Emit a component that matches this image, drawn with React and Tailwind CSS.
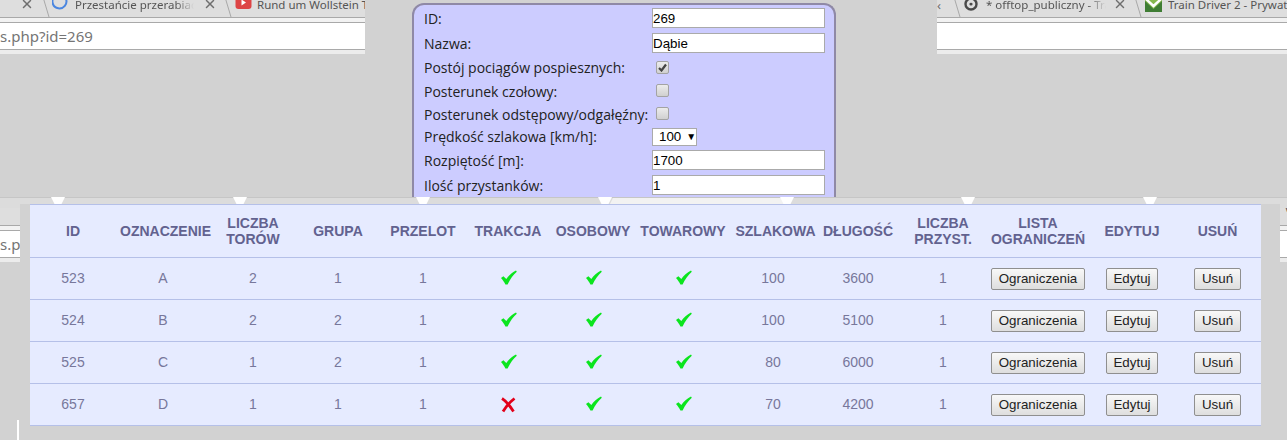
import { X } from 'lucide-react'

const rows = [
  { id: 523, mark: 'A', tracks: 2, group: 1, pass: 1, traction: true, speed: 100, length: 3600, stops: 1 },
  { id: 524, mark: 'B', tracks: 2, group: 2, pass: 1, traction: true, speed: 100, length: 5100, stops: 1 },
  { id: 525, mark: 'C', tracks: 1, group: 2, pass: 1, traction: true, speed: 80, length: 6000, stops: 1 },
  { id: 657, mark: 'D', tracks: 1, group: 1, pass: 1, traction: false, speed: 70, length: 4200, stops: 1 },
]

const columns = [
  { w: 'w-[86px]', label: ['ID'] },
  { w: 'w-[94px]', label: ['OZNACZENIE'], pad: 'pl-[4px]' },
  { w: 'w-[86px]', label: ['LICZBA', 'TORÓW'] },
  { w: 'w-[84px]', label: ['GRUPA'] },
  { w: 'w-[86px]', label: ['PRZELOT'] },
  { w: 'w-[84px]', label: ['TRAKCJA'] },
  { w: 'w-[86px]', label: ['OSOBOWY'] },
  { w: 'w-[94px]', label: ['TOWAROWY'] },
  { w: 'w-[86px]', label: ['SZLAKOWA'], pad: 'pl-[5px]' },
  { w: 'w-[84px]', label: ['DŁUGOŚĆ'] },
  { w: 'w-[86px]', label: ['LICZBA', 'PRZYST.'] },
  { w: 'w-[104px]', label: ['LISTA', 'OGRANICZEŃ'] },
  { w: 'w-[84px]', label: ['EDYTUJ'] },
  { w: 'w-[87px]', label: ['USUŃ'] },
]

function Check() {
  return (
    <svg width="17" height="15" viewBox="0 0 17 15" className="mx-auto -mt-[2px] block">
      <path d="M1 8 L3.4 6.2 L6.3 9 C8.6 5.6 12 2.6 16 0.5 L16.8 1.8 C13 5 10 9.6 7.6 14.5 L5.4 14.5 C4.4 12.2 2.8 10 1 8 Z" fill="#0be51e" />
    </svg>
  )
}

function Cross() {
  return (
    <svg width="16" height="16" viewBox="0 0 16 16" className="mx-auto block">
      <path d="M2 1.5 C6 4 10 9 13.5 14.5 M14.5 1.5 C10 5 6 9.5 3 14.5" stroke="#e2001a" strokeWidth="2.8" fill="none" />
    </svg>
  )
}

function Slash() {
  return (
    <svg width="8" height="17" viewBox="0 0 8 17" className="shrink-0">
      <path d="M1 -3 L7 17" stroke="#a8a8a8" fill="none" />
    </svg>
  )
}

function Close({ className }) {
  return <X size={14} strokeWidth={2.5} className={`mb-[6px] shrink-0 text-[#6e6e6e] ${className}`} />
}

function Title({ w, children }) {
  return (
    <span className={`${w} mb-[5px] shrink-0 overflow-hidden whitespace-nowrap text-[11.5px] leading-[14px] text-[#555] [mask-image:linear-gradient(to_right,black_85%,transparent)]`}>
      {children}
    </span>
  )
}

function Chrome({ w, tabs, url }) {
  return (
    <div className={`${w} shrink-0`}>
      <div className="flex h-[18px] items-end overflow-hidden border-b border-[#a9a9a9] bg-[#dedede] font-['Noto_Sans',sans-serif]">
        {tabs}
      </div>
      <div className="h-[4px] bg-[#f2f2f2]" />
      <div className="flex h-[28px] items-center overflow-hidden whitespace-nowrap border-y border-[#a9a9a9] bg-white font-['Noto_Sans',sans-serif] text-[15px] text-[#757575]">
        {url}
      </div>
      <div className="h-[4px] bg-[#ececec]" />
    </div>
  )
}

const leftTabs = (
  <>
    <Close className="ml-[20px]" />
    <span className="w-[8px] shrink-0" />
    <Slash />
    <svg width="16" height="16" viewBox="0 0 16 16" className="mb-[6px] ml-[2px] shrink-0">
      <path d="M2 2 A7 7 0 1 0 14 4" stroke="#4a86e0" strokeWidth="2" fill="none" />
    </svg>
    <span className="w-[7px] shrink-0" />
    <Title w="w-[119px]">Przestańcie przerabiać</Title>
    <Close className="ml-[9px]" />
    <span className="w-[7px] shrink-0" />
    <Slash />
    <svg width="17" height="14" viewBox="0 0 17 14" className="mb-[7px] ml-[3px] shrink-0">
      <rect x="0.5" y="0" width="16" height="13" rx="3" fill="#dd4445" />
      <path d="M6.5 3.5 L11 6.5 L6.5 9.5 Z" fill="#fff" />
    </svg>
    <span className="w-[5px] shrink-0" />
    <span className="mb-[5px] overflow-hidden whitespace-nowrap text-[11.5px] leading-[14px] text-[#555]">Rund um Wollstein Tour</span>
  </>
)

const rightTabs = (
  <>
    <span className="mb-[5px] w-[16px] shrink-0 text-[13px] leading-[14px] text-[#6e6e6e]">‹</span>
    <Slash />
    <svg width="14" height="16" viewBox="0 0 14 16" className="mb-[6px] ml-[3px] shrink-0">
      <circle cx="7" cy="9" r="5.5" stroke="#4a4a4a" strokeWidth="2.4" fill="none" />
      <circle cx="7" cy="9" r="1.6" fill="#4a4a4a" />
      <path d="M7 0 V8" stroke="#dedede" strokeWidth="1" />
    </svg>
    <span className="w-[8px] shrink-0" />
    <Title w="w-[120px]">* offtop_publiczny - Train</Title>
    <Close className="ml-[7px]" />
    <span className="w-[7px] shrink-0" />
    <Slash />
    <svg width="17" height="15" viewBox="0 0 17 15" className="mb-[5px] ml-[3px] shrink-0">
      <rect width="17" height="15" fill="#3f7d34" />
      <path d="M0 0 H17 V4 L8.5 12 L0 4 Z" fill="#86b84e" />
      <path d="M1 2 L8.5 9 L16 2" stroke="#fff" strokeWidth="2.4" fill="none" />
    </svg>
    <span className="w-[6px] shrink-0" />
    <span className="mb-[5px] overflow-hidden whitespace-nowrap text-[11.5px] leading-[14px] text-[#555]">Train Driver 2 - Prywatna</span>
  </>
)

function TabStrip() {
  const notches = [58, 240, 423, 605, 787, 968, 1150]
  return (
    <svg width="1287" height="7" viewBox="0 0 1287 7" className="block shrink-0">
      <rect width="1287" height="7" fill="#dcdcdc" />
      <path d="M0 0.5 H1287" stroke="#c6c6c6" />
      <path d="M610 7 L613 1 H781 L785 7 Z" fill="#f2f2f2" />
      {notches.map((x) => (
        <path key={x} d={`M${x - 7} 0 H${x + 7} L${x + 3.5} 7 H${x - 3.5} Z`} fill="#fff" />
      ))}
    </svg>
  )
}

const inputClass =
  "h-[20px] w-[173px] border border-[#aaa] bg-white font-['Liberation_Sans',sans-serif] text-[13.33px] text-black outline-none"

function FormRow({ h, label, lead = 'leading-[22px]', children }) {
  return (
    <div className={`flex ${h} items-start`}>
      <label className={`w-[228px] shrink-0 whitespace-nowrap text-[14px] text-[#222] ${lead}`}>{label}</label>
      {children}
    </div>
  )
}

function Box({ checked }) {
  return (
    <span className="ml-[4px] mt-[3px] flex h-[13px] w-[13px] items-center justify-center rounded-[2px] border border-[#a3a3a3] bg-gradient-to-b from-[#ececec] to-[#d0d0d0]">
      {checked && (
        <svg width="9" height="9" viewBox="0 0 9 9">
          <path d="M1 5 L3.5 7.5 L8 1.5" stroke="#444" strokeWidth="2.2" fill="none" />
        </svg>
      )}
    </span>
  )
}

function Dialog() {
  return (
    <form className="ml-[47px] mt-[3px] h-[194px] w-[424px] shrink-0 overflow-hidden rounded-t-[12px] border-x-2 border-t-2 border-[#8f89a6] bg-[#ccccff] pl-[10px] pt-[3px] font-['Open_Sans',sans-serif]">
      <FormRow h="h-[25px]" label="ID:">
        <input className={inputClass} defaultValue="269" />
      </FormRow>
      <FormRow h="h-[25px]" label="Nazwa:">
        <input className={inputClass} defaultValue="Dąbie" />
      </FormRow>
      <FormRow h="h-[23px]" lead="leading-[20px]" label="Postój pociągów pospiesznych:">
        <Box checked />
      </FormRow>
      <FormRow h="h-[23px]" label="Posterunek czołowy:">
        <Box />
      </FormRow>
      <FormRow h="h-[23px]" label="Posterunek odstępowy/odgałęźny:">
        <Box />
      </FormRow>
      <FormRow h="h-[23px]" lead="leading-[20px]" label="Prędkość szlakowa [km/h]:">
        <span className="mt-[1px] flex h-[18px] w-[45px] items-center gap-[5px] border border-[#aaa] bg-white pl-[6px] font-['Liberation_Sans',sans-serif] text-[13.33px] text-black">
          100
          <span className="text-[10px] leading-none">▼</span>
        </span>
      </FormRow>
      <FormRow h="h-[25px]" label="Rozpiętość [m]:">
        <input className={inputClass} defaultValue="1700" />
      </FormRow>
      <FormRow h="h-[25px]" label="Ilość przystanków:">
        <input className={inputClass} defaultValue="1" />
      </FormRow>
    </form>
  )
}

function ActionButton({ children }) {
  return (
    <button className="h-[22px] rounded-[2px] border border-[#8f8f8f] bg-gradient-to-b from-[#f8f8f8] to-[#dedede] px-[6.5px] text-[13.33px] leading-[18px] text-[#222]">
      {children}
    </button>
  )
}

function StopsTable() {
  const cell = 'h-[42px] border-b border-[#b5c0e8] p-0 text-center'
  return (
    <table className="w-[1231px] table-fixed border-collapse bg-[#e6ebff] font-['Liberation_Sans',sans-serif] text-[14px] text-[#77779b]">
      <colgroup>
        {columns.map((c, i) => (
          <col key={i} className={c.w} />
        ))}
      </colgroup>
      <thead>
        <tr>
          {columns.map((c, i) => (
            <th key={i} className={`h-[53px] border-y border-[#b5c0e8] p-0 text-center text-[14px] font-bold leading-[16px] text-[#62628f] ${c.pad || ''}`}>
              {c.label.map((line) => (
                <div key={line} className="whitespace-nowrap">{line}</div>
              ))}
            </th>
          ))}
        </tr>
      </thead>
      <tbody>
        {rows.map((r) => (
          <tr key={r.id}>
            <td className={cell}>{r.id}</td>
            <td className={cell}>{r.mark}</td>
            <td className={cell}>{r.tracks}</td>
            <td className={cell}>{r.group}</td>
            <td className={cell}>{r.pass}</td>
            <td className={cell}>{r.traction ? <Check /> : <Cross />}</td>
            <td className={cell}><Check /></td>
            <td className={cell}><Check /></td>
            <td className={cell}>{r.speed}</td>
            <td className={cell}>{r.length}</td>
            <td className={cell}>{r.stops}</td>
            <td className={cell}><ActionButton>Ograniczenia</ActionButton></td>
            <td className={cell}><ActionButton>Edytuj</ActionButton></td>
            <td className={cell}><ActionButton>Usuń</ActionButton></td>
          </tr>
        ))}
      </tbody>
    </table>
  )
}

export default function App() {
  return (
    <div className="relative h-[440px] w-[1287px] overflow-hidden bg-[#d2d2d2]">
      <div className="flex h-[197px] items-start">
        <Chrome w="w-[365px]" tabs={leftTabs} url={<span>s.php?id=269</span>} />
        <Dialog />
        <div className="ml-[101px]">
          <Chrome w="w-[350px]" tabs={rightTabs} />
        </div>
      </div>
      <TabStrip />
      <div className="flex items-start">
        <div className="w-[20px] shrink-0 bg-[#dcdcdc] pt-[4px]">
          <Chrome w="w-[20px]" tabs={null} url={<span>s.ph</span>} />
        </div>
        <div className="w-[1260px] shrink-0 pb-[14px] pl-[10px] pr-[19px]">
          <StopsTable />
        </div>
        <div className="w-[7px] shrink-0 bg-[#dcdcdc] pt-[4px]">
          <Chrome w="w-[7px]" tabs={<span className="mb-[10px] ml-[4px] text-[12px] leading-[14px] text-[#555]">V</span>} />
        </div>
      </div>
      <div className="absolute left-[17px] top-[420px] h-[20px] w-[2px] bg-white" />
    </div>
  )
}
